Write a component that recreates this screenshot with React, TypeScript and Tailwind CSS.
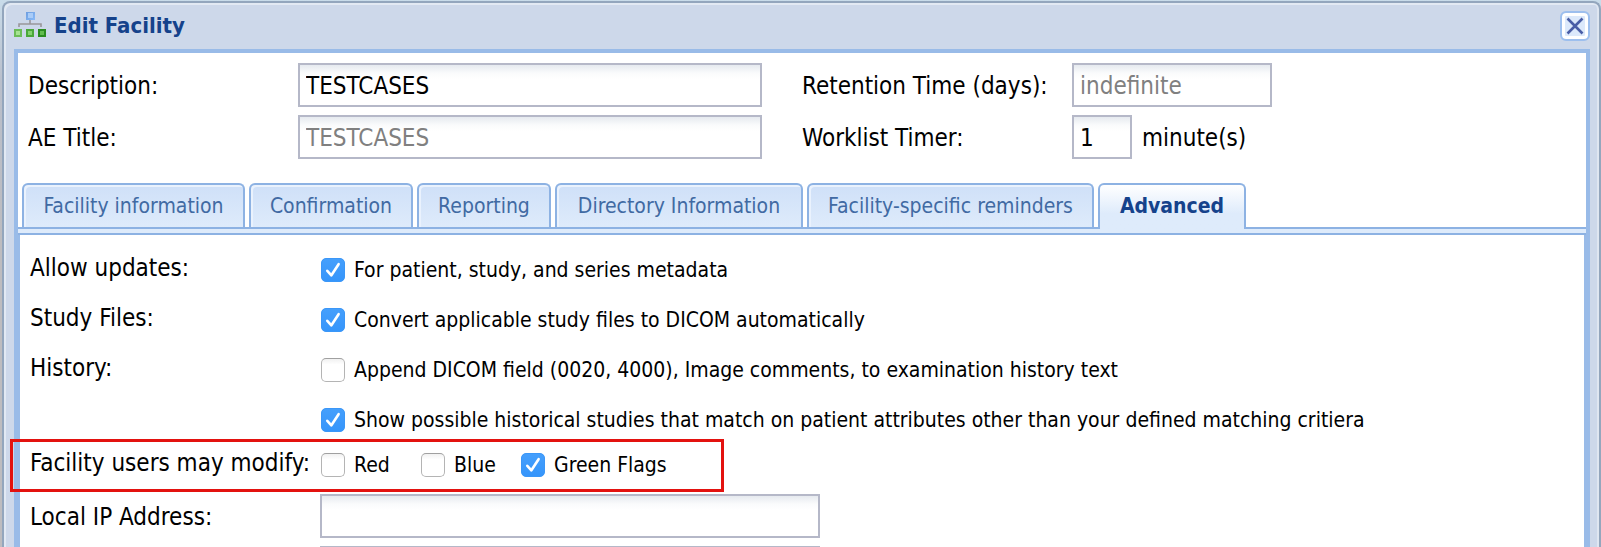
import { useState } from 'react';
import type { ReactNode } from 'react';

const fieldClass =
  'h-11 border-2 border-[#b5b8c8] bg-white bg-linear-to-b from-[#e6eaef] from-0% via-[#fafbfc] via-20% to-white to-35% px-1.5 pt-0.5 text-2xl text-black outline-none disabled:text-[#808080]';

function Field({ id, value, disabled, width }: { id: string; value: string; disabled?: boolean; width: string }) {
  return <input id={id} type="text" defaultValue={value} disabled={disabled} className={`${fieldClass} ${width}`} />;
}

function Check({ label, checked }: { label: string; checked?: boolean }) {
  return (
    <label className="flex items-center gap-[9px] text-[21px] whitespace-nowrap">
      <span className="relative block size-6">
        <input
          type="checkbox"
          defaultChecked={checked}
          className="peer block size-6 appearance-none rounded-[5px] border border-[#b4b4b4] border-t-[#a0a0a0] bg-white bg-linear-to-b from-[#f1f1f1] to-white to-25% checked:border-[#3b97f8] checked:bg-[#3b99fc] checked:from-[#459ffc] checked:to-[#3595fb] checked:to-100%"
        />
        <svg
          viewBox="0 0 24 24"
          className="pointer-events-none absolute inset-0 hidden size-6 peer-checked:block"
          fill="none"
          stroke="white"
          strokeWidth="2.6"
          strokeLinecap="round"
          strokeLinejoin="round"
        >
          <path d="M6.3 12.8 10.4 17.3 17.6 6.2" />
        </svg>
      </span>
      {label}
    </label>
  );
}

function Row({ label, height = 'h-[50px]', children }: { label?: string; height?: string; children: ReactNode }) {
  return (
    <div role="group" aria-label={label} className={`flex items-center ${height}`}>
      <span className="w-[291px] shrink-0 pb-1 whitespace-nowrap">{label}</span>
      {children}
    </div>
  );
}

const tabs = [
  { name: 'Facility information', width: 'w-[223px]' },
  { name: 'Confirmation', width: 'w-[164px]' },
  { name: 'Reporting', width: 'w-[134px]' },
  { name: 'Directory Information', width: 'w-[248px]' },
  { name: 'Facility-specific reminders', width: 'w-[287px]' },
  { name: 'Advanced', width: 'w-[148px]' },
];

function FacilityIcon() {
  return (
    <svg width="32" height="28" viewBox="0 0 32 28" aria-hidden="true">
      <defs>
        <linearGradient id="blueNode" x2="1" y2="1">
          <stop stopColor="#6f9fe0" />
          <stop offset="1" stopColor="#85b7f5" />
        </linearGradient>
      </defs>
      <path d="M5 15v-3h22v3M16 8v4" fill="none" stroke="#99979b" strokeWidth="1.6" />
      <rect x="13" y="0" width="7" height="7" fill="#a9ccf8" stroke="url(#blueNode)" strokeWidth="2" />
      <rect x="1" y="18" width="6" height="6" fill="#a6e392" stroke="#6cbd58" strokeWidth="2" />
      <rect x="13" y="18" width="6" height="6" fill="#84d270" stroke="#4aa83a" strokeWidth="2" />
      <rect x="25" y="18" width="6" height="6" fill="#62bd4e" stroke="#2b8c20" strokeWidth="2" />
    </svg>
  );
}

export default function App() {
  const [active, setActive] = useState('Advanced');
  return (
    <div className="flex h-screen flex-col overflow-hidden bg-linear-to-b from-[#c9dcea] via-[#b9bfcb] via-15% to-[#bdbcbf] to-45% pt-px pl-0.5 font-['DejaVu_Sans_Condensed','DejaVu_Sans',sans-serif] text-2xl leading-7 text-black">
      <section className="flex flex-1 flex-col rounded-t-lg border-2 border-b-0 border-[#93a6bd] bg-[#cdd8ea] shadow-[inset_2px_2px_0_#e2e9f3,inset_-2px_0_0_#dfe6f1]">
        <header className="flex h-[46px] shrink-0 items-center justify-between pr-[9px] pl-2.5">
          <h1 className="flex items-center gap-2 text-[22px] font-bold text-[#15428b]">
            <FacilityIcon />
            Edit Facility
          </h1>
          <button
            type="button"
            aria-label="Close"
            className="flex size-[30px] items-center justify-center rounded-md border-2 border-[#9dbfee] bg-[#dce9fb] shadow-[inset_0_0_0_3px_#ffffff]"
          >
            <svg width="18" height="18" viewBox="0 0 18 18" fill="none" stroke="#4a5ea6" strokeWidth="2.6">
              <path d="M1.500 1.500 16.500 16.500M16.500 1.500 1.500 16.500" />
            </svg>
          </button>
        </header>

        <main className="relative mr-[9px] ml-2.5 flex flex-1 flex-col border-4 border-b-0 border-[#99bbe8] bg-white">
          <div className="flex gap-10 pt-2.5 pl-2.5 whitespace-nowrap">
            <div className="grid grid-cols-[270px_464px] items-center gap-y-2">
              <label htmlFor="description" className="pt-0.5">Description:</label>
              <Field id="description" value="TESTCASES" width="w-full" />
              <label htmlFor="ae-title" className="pt-0.5">AE Title:</label>
              <Field id="ae-title" value="TESTCASES" disabled width="w-full" />
            </div>
            <div className="grid grid-cols-[270px_200px] items-center gap-y-2">
              <label htmlFor="retention" className="pt-0.5">Retention Time (days):</label>
              <Field id="retention" value="indefinite" disabled width="w-full" />
              <label htmlFor="timer" className="pt-0.5">Worklist Timer:</label>
              <div className="flex items-center gap-2.5">
                <Field id="timer" value="1" width="w-[60px]" />
                <span className="pt-0.5">minute(s)</span>
              </div>
            </div>
          </div>

          <div role="tablist" className="mt-6 flex h-[46px] gap-1 border-b-2 border-[#8db2e3] pl-1 text-[21px]">
            {tabs.map((tab) => (
              <button
                key={tab.name}
                type="button"
                role="tab"
                aria-selected={active === tab.name}
                onClick={() => setActive(tab.name)}
                className={`${tab.width} shrink-0 rounded-t-md border-2 border-b-0 border-[#8db2e3] whitespace-nowrap ${
                  active === tab.name
                    ? 'z-10 -mb-0.5 bg-linear-to-b from-white to-[#deebfb] to-65% pb-0.5 font-bold text-[#15428b]'
                    : 'bg-linear-to-b from-[#cfe0f8] to-[#deebfb] text-[#416aa3] shadow-[inset_2px_2px_0_#eaf2fd]'
                }`}
              >
                {tab.name}
              </button>
            ))}
          </div>
          <div className="h-1.5 shrink-0 border-b-2 border-[#8db2e3] bg-[#deebfb]" />

          <div className="flex-1 border-x-2 border-[#99bbe8] pt-2.5 pl-2.5">
            <Row label="Allow updates:">
              <Check label="For patient, study, and series metadata" checked />
            </Row>
            <Row label="Study Files:">
              <Check label="Convert applicable study files to DICOM automatically" checked />
            </Row>
            <Row label="History:">
              <Check label="Append DICOM field (0020, 4000), Image comments, to examination history text" />
            </Row>
            <Row>
              <Check label="Show possible historical studies that match on patient attributes other than your defined matching critiera" checked />
            </Row>
            <Row label="Facility users may modify:" height="h-10">
              <div className="flex">
                <div className="w-[100px]">
                  <Check label="Red" />
                </div>
                <div className="w-[100px]">
                  <Check label="Blue" />
                </div>
                <Check label="Green Flags" checked />
              </div>
            </Row>
            <div className="grid grid-cols-[290px_500px] items-center gap-y-2 pt-[9px]">
              <label htmlFor="local-ip" className="pt-0.5">Local IP Address:</label>
              <Field id="local-ip" value="" width="w-full" />
              <span />
              <input type="text" aria-label="Additional address" className={fieldClass} />
            </div>
          </div>

          <div className="pointer-events-none absolute top-[386px] -left-2 h-[53px] w-[714px] border-3 border-[#e3120f]" />
        </main>
      </section>
    </div>
  );
}
